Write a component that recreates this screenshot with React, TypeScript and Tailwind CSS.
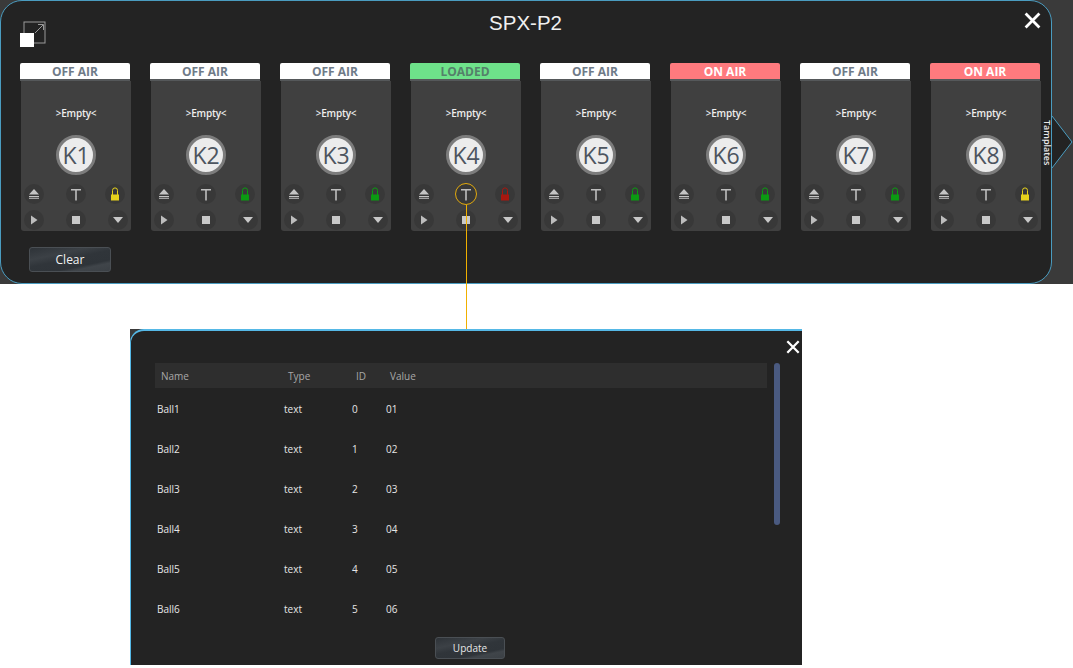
import React from "react";

const uiFont = "font-['Open_Sans',sans-serif]";
const gloss =
  "bg-[linear-gradient(168deg,#2e3338_0%,#3c4146_30%,#30353a_48%,#2f3439_72%,#40454a_80%,#3b4045_100%)]";

type Keyer = {
  key: string;
  status: "OFF AIR" | "LOADED" | "ON AIR";
  lock: string;
  picked?: boolean;
};

const keyers: Keyer[] = [
  { key: "K1", status: "OFF AIR", lock: "#e6d21c" },
  { key: "K2", status: "OFF AIR", lock: "#0b9a12" },
  { key: "K3", status: "OFF AIR", lock: "#0b9a12" },
  { key: "K4", status: "LOADED", lock: "#a8170f", picked: true },
  { key: "K5", status: "OFF AIR", lock: "#0b9a12" },
  { key: "K6", status: "ON AIR", lock: "#0b9a12" },
  { key: "K7", status: "OFF AIR", lock: "#0b9a12" },
  { key: "K8", status: "ON AIR", lock: "#e6d21c" },
];

const rows = [
  ["Ball1", "text", "0", "01"],
  ["Ball2", "text", "1", "02"],
  ["Ball3", "text", "2", "03"],
  ["Ball4", "text", "3", "04"],
  ["Ball5", "text", "4", "05"],
  ["Ball6", "text", "5", "06"],
];

const statusStyle = {
  "OFF AIR": "bg-white text-[#6f7b88]",
  LOADED: "bg-[#6ee28a] text-[#55806a]",
  "ON AIR": "bg-[#ff7a7e] text-white",
};

const Round = ({ children, ring }: { children: React.ReactNode; ring?: boolean }) => (
  <div
    className={`w-5 h-5 rounded-full bg-[#383838] flex items-center justify-center shrink-0 ${
      ring ? "outline outline-1 outline-[#e0a80c]" : ""
    }`}
  >
    {children}
  </div>
);

const CloseIcon = ({ size }: { size: number }) => (
  <svg width={size} height={size} viewBox="0 0 16 16">
    <path d="M1.5 1.5 14.5 14.5M14.5 1.5 1.5 14.5" stroke="#fff" strokeWidth="2.6" />
  </svg>
);

const Card = ({ item }: { item: Keyer }) => (
  <div className="w-[110px] shrink-0">
    <div
      className={`h-[18px] rounded-t-[2px] pt-px flex items-center justify-center border-b-2 border-[#55585a] text-[12px] leading-none font-bold ${uiFont} ${statusStyle[item.status]}`}
    >
      {item.status}
    </div>
    <div className="h-[150px] w-[110px] ml-px bg-[#404040] rounded-b-[3px] flex flex-col items-center pt-[24px]">
      <div className={`h-4 text-[10px] leading-4 font-semibold tracking-[-0.2px] text-[#eeeeee] ${uiFont}`}>
        &gt;Empty&lt;
      </div>
      <div
        className={`w-10 h-10 mt-[14px] rounded-full bg-[#ececec] border-[3px] border-[#7c7c7c] flex items-center justify-center text-[23px] leading-none text-[#4d5560] ${uiFont}`}
      >
        {item.key}
      </div>
      <div className="w-full mt-[9px] flex pl-[3px]">
        <Round>
          <svg width="12" height="12" viewBox="0 0 12 12">
            <path d="M6 1 11 6.5H1Z M1 8H11V9.2H1Z M1 10.2H11V11H1Z" fill="#c4c4c4" />
          </svg>
        </Round>
        <div className="ml-[22px]">
          <Round ring={item.picked}>
            <svg width="10" height="13" viewBox="0 0 10 13">
              <path d="M0 1H10V2.5H5.8V12.5H4.2V2.5H0Z" fill="#bdbdbd" />
            </svg>
          </Round>
        </div>
        <div className="ml-[19px]">
          <Round>
            <svg width="10" height="14" viewBox="0 0 10 14">
              <path d="M2.5 8V3.4a2.5 2.5 0 0 1 5 0V8" fill="none" stroke={item.lock} strokeWidth="1" />
              <rect x="1" y="7.5" width="8" height="6" fill={item.lock} />
            </svg>
          </Round>
        </div>
      </div>
      <div className="w-full mt-[6px] flex pl-[3px]">
        <Round>
          <svg width="10" height="10" viewBox="0 0 10 10">
            <path d="M2 .5 8.5 5 2 9.5Z" fill="#bdbdbd" />
          </svg>
        </Round>
        <div className="ml-[22px]">
          <Round>
            <div className="w-2 h-2 bg-[#c8c8c8]" />
          </Round>
        </div>
        <div className="ml-[22px]">
          <Round>
            <svg width="12" height="10" viewBox="0 0 12 10">
              <path d="M1 2H11L6 8Z" fill="#c8c8c8" />
            </svg>
          </Round>
        </div>
      </div>
    </div>
  </div>
);

const App = () => (
  <div className={`relative w-[1073px] h-[668px] bg-white overflow-hidden ${uiFont}`}>
    {/* top window */}
    <div className="h-[284px] bg-[#3a3a3a] flex">
      <div className="relative w-[1052px] h-[284px] bg-[#232323] border border-[#4a9cc0] rounded-[22px]">
        <div className="h-[62px] pl-[19px] pr-[10px] pt-[10px] flex justify-between">
          <svg width="26" height="27" viewBox="0 0 26 27" className="mt-[10px]">
            <rect x="4" y="1" width="21" height="21" fill="none" stroke="#9a9a9a" strokeWidth="1" />
            <path d="M15 12 23 4M18 3.5H23.5V9" fill="none" stroke="#9a9a9a" strokeWidth="1" />
            <rect x="0" y="12" width="14" height="14" fill="#fff" />
          </svg>
          <div className="font-['Liberation_Sans',sans-serif] text-[20.5px] leading-6 text-[#f0f0f0] -ml-[19px]">SPX-P2</div>
          <div className="mt-[1px]">
            <CloseIcon size={17} />
          </div>
        </div>
        <div className="flex gap-5 pl-[19px]">
          {keyers.map((item) => (
            <Card key={item.key} item={item} />
          ))}
        </div>
        <button
          className={`ml-[28px] mt-[16px] w-[82px] h-[25px] rounded-[3px] border border-[#4a4f54] text-[12px] font-medium text-[#f2f2f2] ${uiFont} ${gloss}`}
        >
          Clear
        </button>
      </div>
    </div>

    {/* Tamplates tab */}
    <svg width="23" height="56" viewBox="0 0 23 56" className="absolute left-[1050px] top-[114px]">
      <path d="M2 2 22 28 2 54Z" fill="#232323" />
      <path d="M1.5 0V56M2 2 22 28 2 54" fill="none" stroke="#4a9cc0" strokeWidth="1" />
    </svg>
    <div className="absolute left-[1041px] top-[120px] h-[45px] w-[12px] [writing-mode:vertical-rl] text-[9px] leading-[12px] font-semibold text-[#e8e8e8] text-center">
      Tamplates
    </div>

    {/* callout from the T button to the variables panel */}
    <div className="absolute left-[466px] top-[205px] w-px h-[125px] bg-[#f0b000]" />

    {/* variables panel */}
    <div className="mt-[45px] ml-[130px] w-[672px] h-[336px] bg-[#3a3a3a]">
      <div className="relative w-full h-full bg-[#232323] border-t-2 border-l border-[#55b8e6] rounded-tl-[14px] pl-6 pt-[32px]">
        <div className="absolute right-[2px] top-[9px]">
          <CloseIcon size={14} />
        </div>
        <div className="flex items-start gap-[7px]">
          <div className="w-[612px]">
            <div className="h-[25px] pt-px bg-[#2e2e2e] flex items-center text-[10px] text-[#a8a8a8]">
              <span className="w-[133px] pl-[6px] shrink-0">Name</span>
              <span className="w-[68px] shrink-0">Type</span>
              <span className="w-[34px] shrink-0">ID</span>
              <span>Value</span>
            </div>
            {rows.map((row) => (
              <div
                key={row[0]}
                className="h-10 flex items-center text-[10px] text-[#e6e6e6] -ml-[2px] relative top-[1px]"
              >
                <span className="w-[131px] pl-[4px] shrink-0">{row[0]}</span>
                <span className="w-[68px] shrink-0">{row[1]}</span>
                <span className="w-[34px] shrink-0">{row[2]}</span>
                <span>{row[3]}</span>
              </div>
            ))}
          </div>
          <div className="w-[6px] h-[162px] rounded-full bg-[#4a5a80]" />
        </div>
        <button
          className={`block ml-[280px] mt-[9px] w-[70px] h-[22px] rounded-[3px] border border-[#4a4f54] text-[10px] font-medium text-[#e8e8e8] ${uiFont} ${gloss}`}
        >
          Update
        </button>
      </div>
    </div>
  </div>
);

export default App;
